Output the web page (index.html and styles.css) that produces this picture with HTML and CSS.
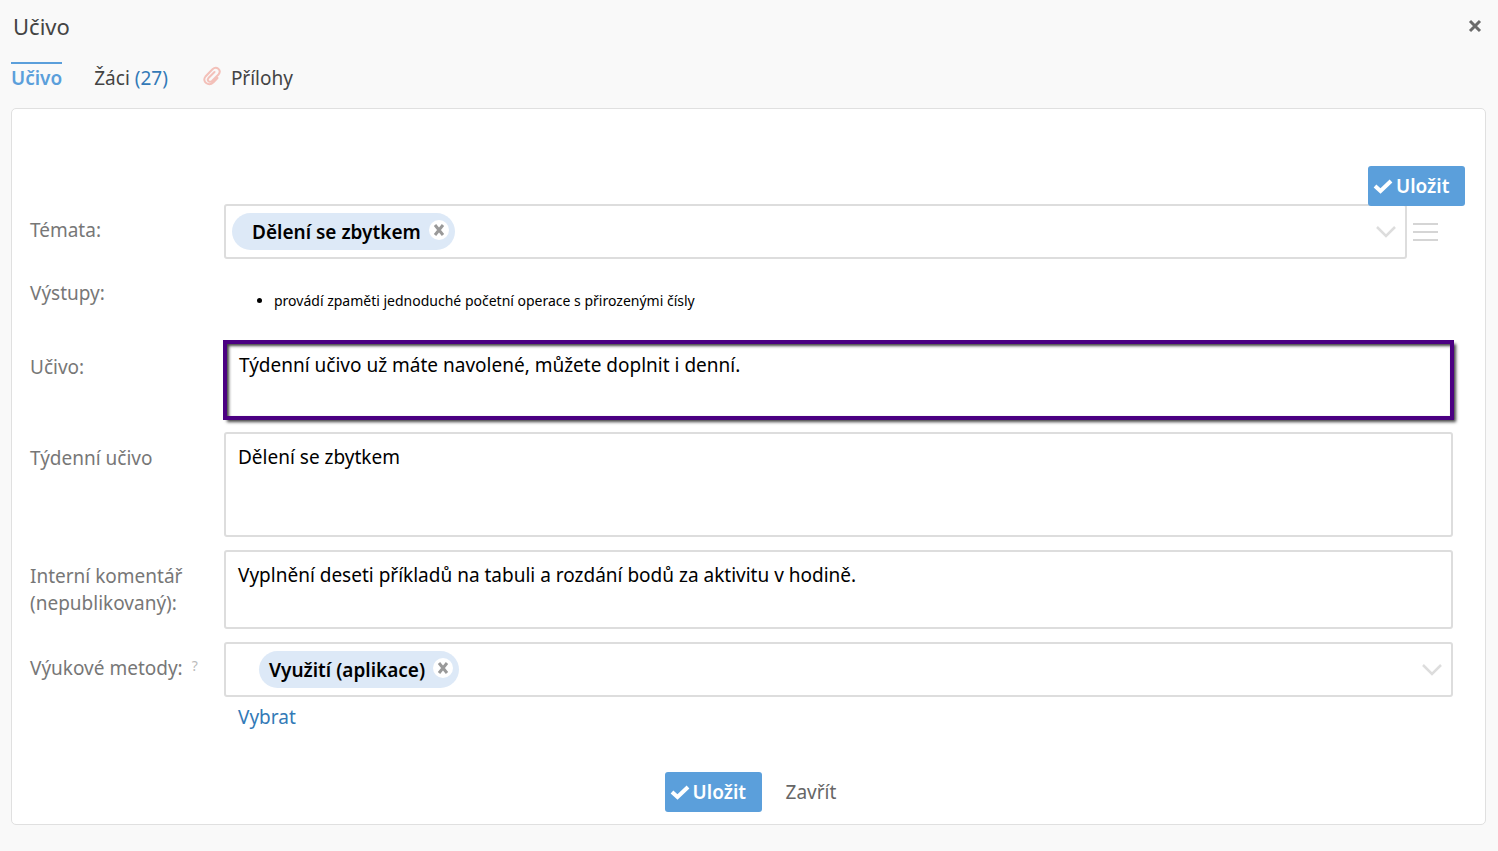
FILE: index.html
```
<!DOCTYPE html>
<html lang="cs">
<head>
    <meta charset="UTF-8">
    <meta name="viewport" content="width=device-width, initial-scale=1.0">
    <title>Učivo</title>
    <link rel="stylesheet" href="styles.css">
</head>

<body>
    <header class="header">
        <h1>Učivo</h1>
        <button type="button" class="close" aria-label="Zavřít okno">
            <svg width="14" height="14" viewBox="0 0 14 14"><path d="M2 2L12 12M12 2L2 12" stroke="#6b6b6b" stroke-width="3"/></svg>
        </button>
    </header>

    <nav class="tabs">
        <a href="#ucivo" class="tab active">Učivo</a>
        <a href="#zaci" class="tab">Žáci <span class="count">(27)</span></a>
        <a href="#prilohy" class="tab attach">
            <svg width="20" height="22" viewBox="0 0 20 22" fill="none" stroke="#f3c0b9" stroke-width="2" stroke-linecap="round"><path d="M15.500 13L11.500 17.300C6.500 22 -.500 16.500 3.500 11.500L10.500 4.200C14.500 .500 20 5.200 16.500 9.500L10 16C7.500 18 4.500 15.500 6.500 13L12.500 7"/></svg>
            Přílohy
        </a>
    </nav>

    <form class="panel">
        <div class="toolbar">
            <button type="button" class="save">
                <svg width="20" height="16" viewBox="0 0 20 16"><path d="M2 8L7.500 13L18 3" fill="none" stroke="#fff" stroke-width="4"/></svg>
                Uložit
            </button>
        </div>

        <div class="row">
            <span class="label">Témata:</span>
            <div class="with-menu">
                <div class="select">
                    <span class="chip wide">Dělení se zbytkem
                        <button type="button" class="remove" aria-label="Odebrat"><svg width="12" height="12" viewBox="0 0 12 12"><path d="M2 1L10 11M10 1L2 11" stroke="#999" stroke-width="3"/></svg></button>
                    </span>
                    <button type="button" class="arrow" aria-label="Rozbalit"><svg width="22" height="14" viewBox="0 0 22 14"><path d="M2 2L11 11L20 2" fill="none" stroke="#ddd" stroke-width="2.500"/></svg></button>
                </div>
                <button type="button" class="menu" aria-label="Nabídka"><svg width="25" height="20" viewBox="0 0 25 20"><path d="M0 2H25M0 10H25M0 18H25" stroke="#d5d5d5" stroke-width="2"/></svg></button>
            </div>
        </div>

        <div class="row outputs">
            <span class="label">Výstupy:</span>
            <ul>
                <li>provádí zpaměti jednoduché početní operace s přirozenými čísly</li>
            </ul>
        </div>

        <div class="row">
            <label class="label" for="ucivo">Učivo:</label>
            <textarea id="ucivo" class="highlight">Týdenní učivo už máte navolené, můžete doplnit i denní.</textarea>
        </div>

        <div class="row">
            <label class="label" for="tydenni">Týdenní učivo</label>
            <textarea id="tydenni" class="tall">Dělení se zbytkem</textarea>
        </div>

        <div class="row">
            <label class="label" for="komentar">Interní komentář (nepublikovaný):</label>
            <textarea id="komentar">Vyplnění deseti příkladů na tabuli a rozdání bodů za aktivitu v hodině.</textarea>
        </div>

        <div class="row">
            <span class="label">Výukové metody: <sup class="help">?</sup></span>
            <div>
                <div class="select indent">
                    <span class="chip">Využití (aplikace)
                        <button type="button" class="remove" aria-label="Odebrat"><svg width="12" height="12" viewBox="0 0 12 12"><path d="M2 1L10 11M10 1L2 11" stroke="#999" stroke-width="3"/></svg></button>
                    </span>
                    <button type="button" class="arrow" aria-label="Rozbalit"><svg width="22" height="14" viewBox="0 0 22 14"><path d="M2 2L11 11L20 2" fill="none" stroke="#ddd" stroke-width="2.500"/></svg></button>
                </div>
                <a href="#vybrat" class="pick">Vybrat</a>
            </div>
        </div>

        <div class="buttons">
            <button type="button" class="save">
                <svg width="20" height="16" viewBox="0 0 20 16"><path d="M2 8L7.500 13L18 3" fill="none" stroke="#fff" stroke-width="4"/></svg>
                Uložit
            </button>
            <button type="button" class="cancel">Zavřít</button>
        </div>
    </form>
</body>
</html>
```
FILE: styles.css
```
*{
    margin: 0;
    padding: 0;
    box-sizing: border-box;
}
body{
    background-color: #f9f9f9;
    font-family: "Noto Sans", "Open Sans", sans-serif;
    font-size: 19px;
    line-height: 27px;
    color: #444;
    padding: 0 12px 26px 11px;
}
button{
    font: inherit;
    border: none;
    background: none;
    cursor: pointer;
}
svg{
    display: block;
    flex: none;
}
a{
    text-decoration: none;
    color: #337ab7;
}
.header{
    display: flex;
    align-items: center;
    justify-content: space-between;
    height: 52px;
    padding: 0 4px 0 2px;
}
.header h1{
    font-size: 22px;
    font-weight: 400;
}
.tabs{
    display: flex;
    gap: 32px;
    height: 56px;
    padding-top: 10px;
}
.tab{
    color: #444;
    height: 30px;
    padding-top: 1px;
    border-top: 2px solid transparent;
}
.tab.active{
    color: #5b9fdb;
    border-color: #5b9fdb;
    font-weight: 600;
}
.tab .count{
    color: #337ab7;
}
.attach{
    display: flex;
    gap: 9px;
    margin-left: 2px;
}
.panel{
    background-color: white;
    border: 1px solid #e0e0e0;
    border-radius: 5px;
    padding: 57px 32px 12px 18px;
}
/* the save button hangs slightly over the first field */
.toolbar{
    display: flex;
    justify-content: flex-end;
    position: relative;
    z-index: 1;
    margin-right: -12px;
    margin-bottom: -2px;
}
.save{
    display: flex;
    align-items: center;
    gap: 3px;
    height: 40px;
    width: 97px;
    padding: 0 5px;
    border-radius: 3px;
    background-color: #5b9fdb;
    color: white;
    font-weight: 600;
}
.row{
    display: grid;
    grid-template-columns: 180px 1fr;
    column-gap: 14px;
    margin-bottom: 13px;
}
.label{
    color: #777;
    padding-top: 13px;
}
.help{
    font-size: 14px;
    line-height: 0;
    color: #bbb;
    margin-left: 4px;
    vertical-align: 4px;
}
.with-menu{
    display: flex;
    align-items: center;
    gap: 6px;
}
.menu{
    width: 40px;
}
.select{
    flex: 1;
    display: flex;
    align-items: center;
    justify-content: space-between;
    height: 55px;
    border: 2px solid #ddd;
    border-radius: 3px;
    padding: 0 8px 0 6px;
}
.select.indent{
    padding-left: 33px;
}
.chip{
    display: flex;
    align-items: center;
    gap: 8px;
    height: 37px;
    padding: 2px 6px 0 10px;
    border-radius: 19px;
    background-color: #dde9f7;
    color: black;
    font-weight: 600;
}
.chip.wide{
    padding-left: 20px;
}
.remove{
    display: flex;
    align-items: center;
    justify-content: center;
    width: 20px;
    height: 20px;
    margin-bottom: 6px;
    border-radius: 50%;
    background-color: white;
}
.outputs{
    min-height: 56px;
}
.outputs .label{
    padding-top: 8px;
}
.outputs ul{
    color: black;
    font-size: 14px;
    padding: 15px 0 0 50px;
}
textarea{
    display: block;
    width: 100%;
    height: 79px;
    border: 2px solid #ddd;
    border-radius: 3px;
    padding: 10px 12px;
    font: inherit;
    color: black;
    resize: none;
    background-color: white;
}
textarea.tall{
    height: 105px;
}
textarea.highlight{
    height: 78px;
    border: 3px solid #4b0082;
    border-radius: 0;
    outline: 1px solid #4b0082;
    box-shadow: 3px 3px 3px #444, inset 2px 2px 3px #444;
    padding-top: 8px;
}
.pick{
    display: inline-block;
    margin-left: 14px;
    padding-top: 7px;
}
.buttons{
    display: flex;
    justify-content: center;
    gap: 24px;
    padding: 28px 0 0 18px;
}
.cancel{
    color: #666;
}
```
